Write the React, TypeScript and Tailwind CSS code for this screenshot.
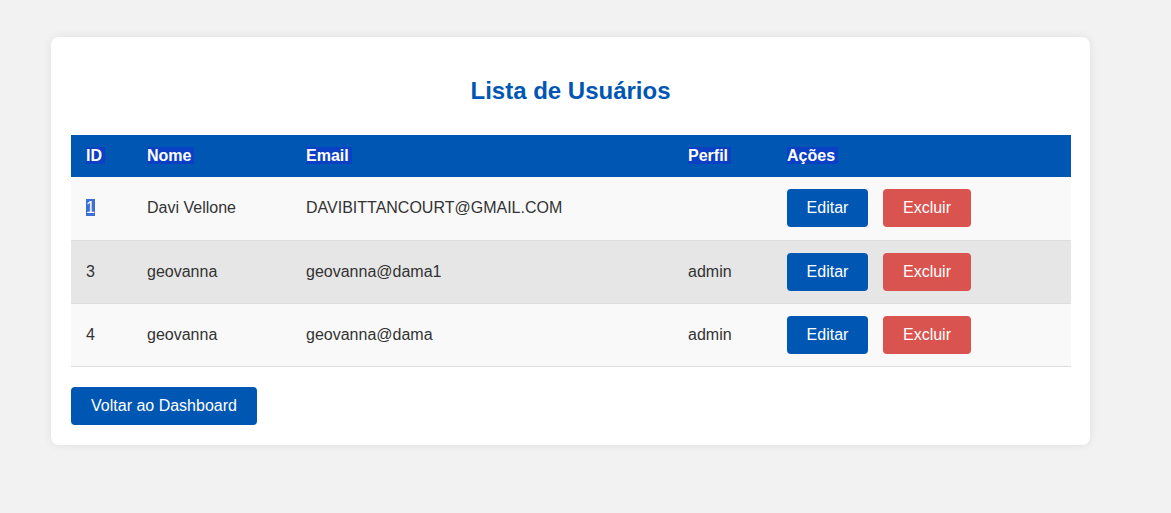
import React from "react";

const rows = [
  { id: "1", nome: "Davi Vellone", email: "DAVIBITTANCOURT@GMAIL.COM", perfil: "", bg: "bg-[#f9f9f9]", sel: true },
  { id: "3", nome: "geovanna", email: "geovanna@dama1", perfil: "admin", bg: "bg-[#e6e6e6]", sel: false },
  { id: "4", nome: "geovanna", email: "geovanna@dama", perfil: "admin", bg: "bg-[#f9f9f9]", sel: false },
];

function H({ children }: { children: React.ReactNode }) {
  return <span className="bg-[#0b40c4] pr-[3px]">{children}</span>;
}

export default function App() {
  return (
    <div
      className="min-h-[513px] bg-[#f2f2f2] pt-[37px] pl-[51px] text-[16px] text-[#333]"
      style={{ fontFamily: '"Liberation Sans", Arial, sans-serif' }}
    >
      <div className="w-[1039px] rounded-[8px] bg-white px-[20px] pt-[40px] pb-[20px] shadow-[0_0_10px_rgba(0,0,0,0.08)]">
        <h2 className="mb-[30px] text-center text-[24px] font-bold leading-[28px] text-[#0056b3]">
          Lista de Usuários
        </h2>
        <table className="w-[1000px] table-fixed border-collapse">
          <colgroup>
            <col className="w-[61px]" />
            <col className="w-[159px]" />
            <col className="w-[382px]" />
            <col className="w-[99px]" />
            <col className="w-[299px]" />
          </colgroup>
          <thead>
            <tr className="bg-[#0056b3] text-left font-bold text-white">
              <th className="h-[42px] px-[15px] leading-[18px]"><H>ID</H></th>
              <th className="px-[15px] leading-[18px]"><H>Nome</H></th>
              <th className="px-[15px] leading-[18px]"><H>Email</H></th>
              <th className="px-[15px] leading-[18px]"><H>Perfil</H></th>
              <th className="px-[15px] leading-[18px]"><H>Ações</H></th>
            </tr>
          </thead>
          <tbody>
            {rows.map((r) => (
              <tr key={r.id} className={`${r.bg} border-b border-[#dddddd]`}>
                <td className="h-[63px] px-[15px]">
                  {r.sel ? <span className="bg-[#3b6fd6] text-white">{r.id}</span> : r.id}
                </td>
                <td className="px-[15px]">{r.nome}</td>
                <td className="px-[15px]">{r.email}</td>
                <td className="px-[15px]">{r.perfil}</td>
                <td className="px-[15px]">
                  <div className="flex items-center gap-[15px]">
                    <button className="h-[38px] w-[81px] rounded-[4px] bg-[#0056b3] text-[16px] text-white">
                      Editar
                    </button>
                    <button className="h-[38px] w-[88px] rounded-[4px] bg-[#d9534f] text-[16px] text-white">
                      Excluir
                    </button>
                  </div>
                </td>
              </tr>
            ))}
          </tbody>
        </table>
        <button className="mt-[20px] h-[38px] w-[186px] rounded-[4px] bg-[#0056b3] text-[16px] text-white">
          Voltar ao Dashboard
        </button>
      </div>
    </div>
  );
}
